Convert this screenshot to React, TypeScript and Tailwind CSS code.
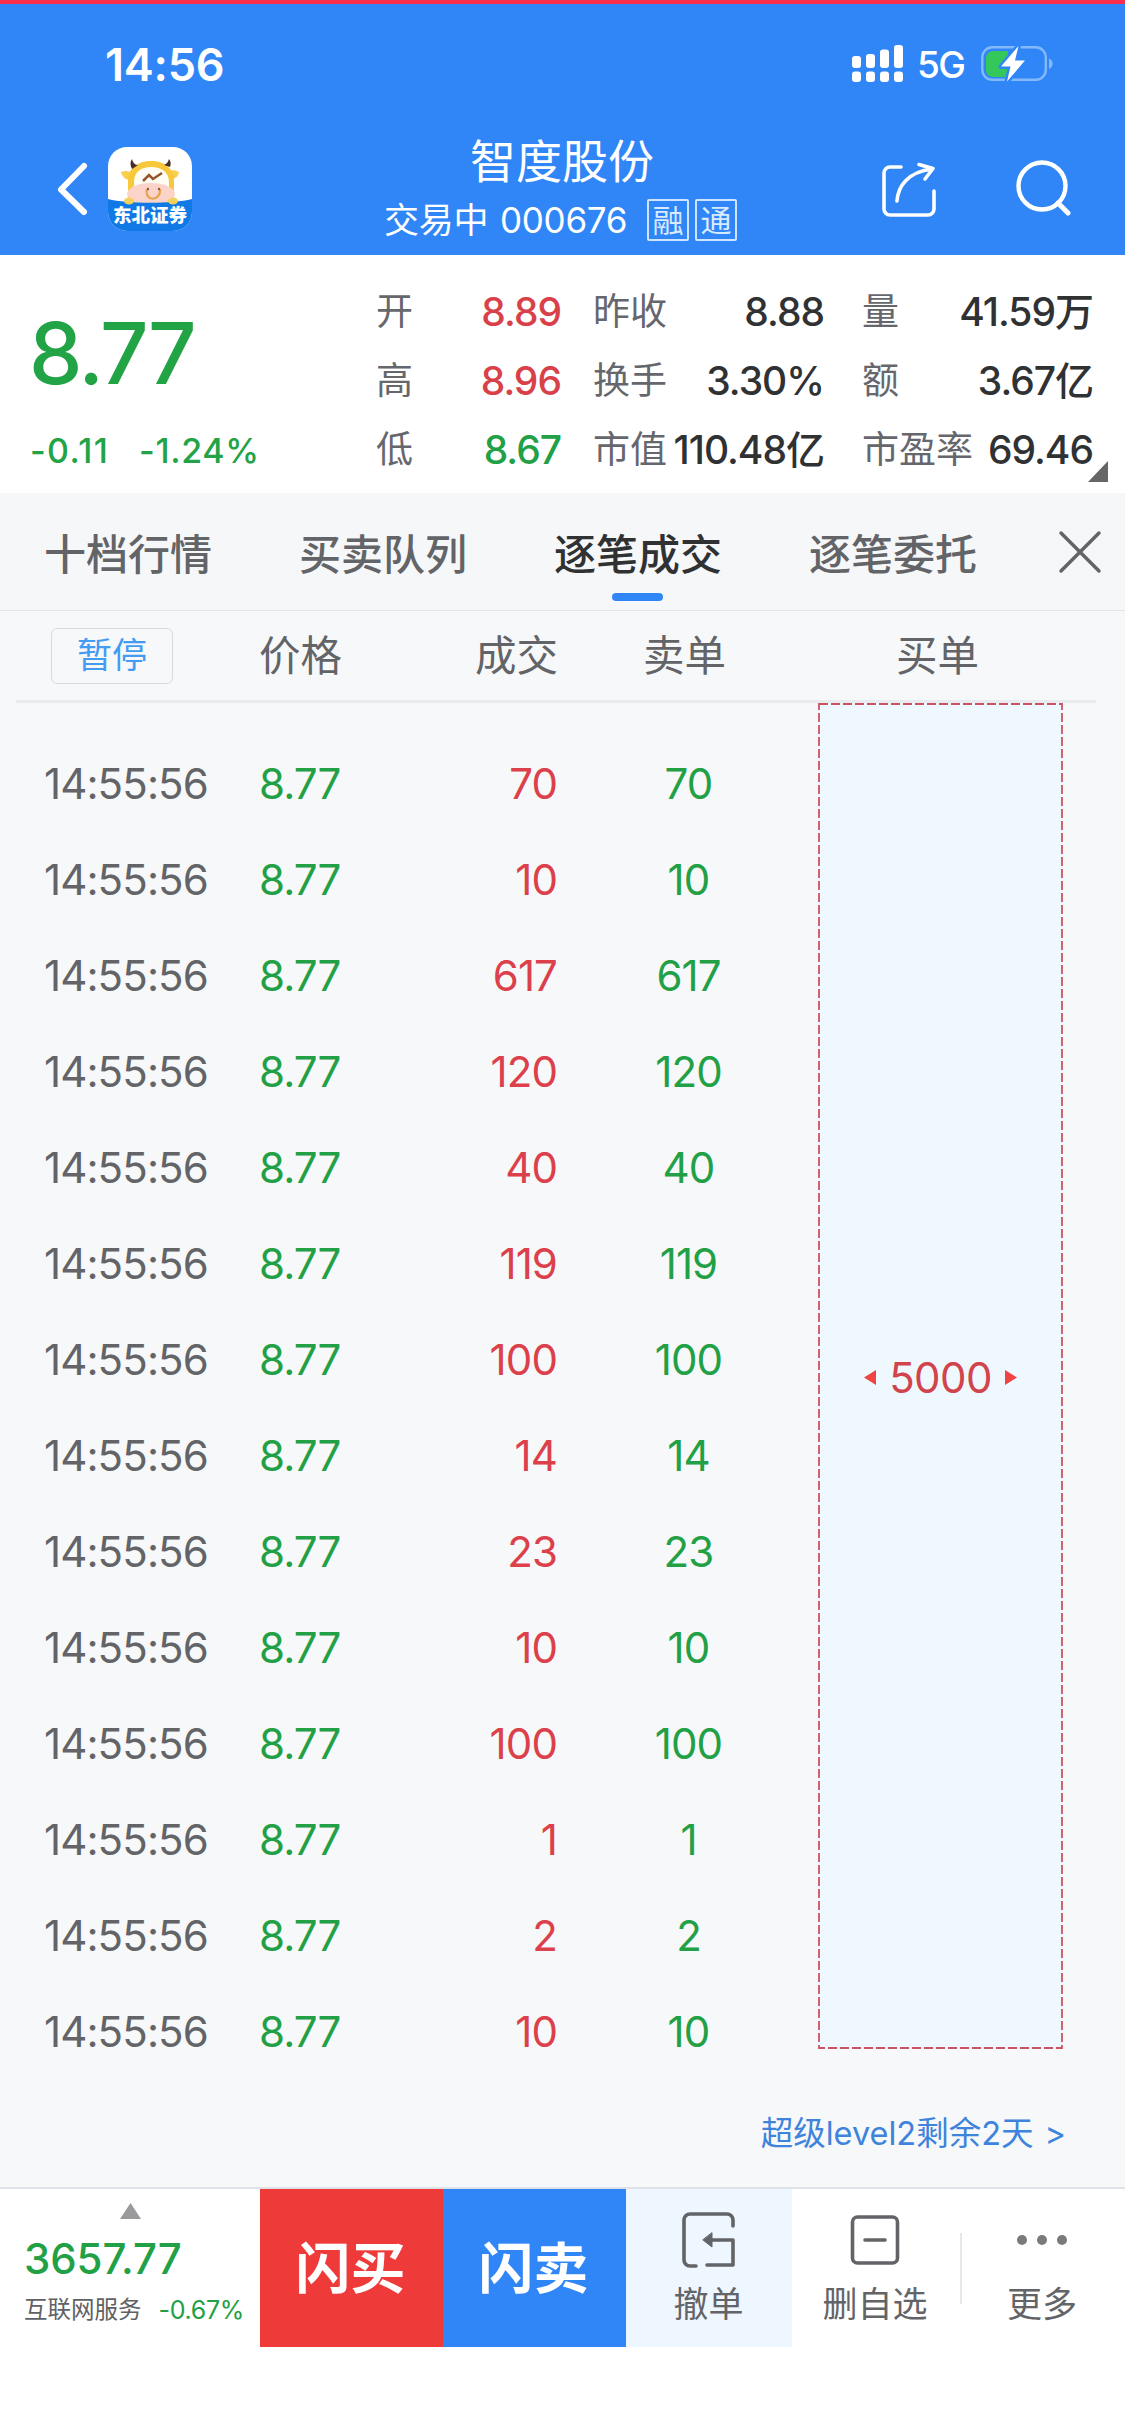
import type { ReactNode } from "react";

const stats = [
  { label: "开", value: "8.89", color: "text-[#d9414a]" },
  { label: "昨收", value: "8.88", color: "text-[#303133]" },
  { label: "量", value: "41.59万", color: "text-[#303133]" },
  { label: "高", value: "8.96", color: "text-[#d9414a]" },
  { label: "换手", value: "3.30%", color: "text-[#303133]" },
  { label: "额", value: "3.67亿", color: "text-[#303133]" },
  { label: "低", value: "8.67", color: "text-[#22a045]" },
  { label: "市值", value: "110.48亿", color: "text-[#303133]" },
  { label: "市盈率", value: "69.46", color: "text-[#303133]" },
];

const tabs = ["十档行情", "买卖队列", "逐笔成交", "逐笔委托"];
const activeTab = "逐笔成交";

const volumes = [70, 10, 617, 120, 40, 119, 100, 14, 23, 10, 100, 1, 2, 10];
const trades = volumes.map((volume) => ({
  time: "14:55:56",
  price: "8.77",
  volume,
}));

export default function App() {
  return (
    <main className="flex h-[2436px] w-[1125px] flex-col overflow-hidden bg-white font-['Inter','Noto_Sans_CJK_SC',sans-serif]">
      <header className="h-[255px] border-t-4 border-[#f92f4d] bg-[#3086f7] text-white">
        <StatusBar />
        <TitleBar />
      </header>
      <Quote />
      <Tabs />
      <TradeTable />
      <BottomBar />
    </main>
  );
}

function StatusBar() {
  return (
    <div className="flex h-[120px] items-center justify-between pl-[105px] pr-[72px]">
      <span className="text-[45px] font-semibold leading-none tracking-[-0.2px]">
        14:56
      </span>
      <div className="flex items-center">
        <svg width="52" height="38" viewBox="0 0 52 38" fill="currentColor">
          <rect x="0" y="11" width="9" height="12" rx="3" />
          <rect x="14" y="9" width="9" height="14" rx="3" />
          <rect x="28" y="4.5" width="9" height="18.5" rx="3" />
          <rect x="42" y="0" width="9" height="23" rx="3" />
          <rect x="0" y="26.5" width="9" height="10.5" rx="3" />
          <rect x="14" y="26.5" width="9" height="10.5" rx="3" />
          <rect x="28" y="26.5" width="9" height="10.5" rx="3" />
          <rect x="42" y="26.5" width="9" height="10.5" rx="3" />
        </svg>
        <span className="ml-[13px] w-[50px] pt-[1px] text-[37px] font-medium leading-none tracking-[-1.6px]">
          5G
        </span>
        <svg
          className="ml-[14px]"
          width="72"
          height="38"
          viewBox="0 0 72 38"
          fill="none"
        >
          <rect
            x="1.3"
            y="2.3"
            width="63.5"
            height="32.5"
            rx="10"
            stroke="#83b9fb"
            strokeWidth="2.4"
          />
          <path d="M68 13.5c2.6 1 3.6 3 3.6 5.2s-1 4.2-3.6 5.2z" fill="#83b9fb" />
          <path d="M12 6h15v26H12a7 7 0 0 1-7-7V13a7 7 0 0 1 7-7z" fill="#34c759" />
          <path
            d="M37.5 1 20 21.5h9.5L26 36.5l18-21h-10z"
            fill="#fff"
            stroke="#3086f7"
            strokeWidth="5"
            strokeLinejoin="round"
            paintOrder="stroke"
          />
        </svg>
      </div>
    </div>
  );
}

function TitleBar() {
  return (
    <div className="flex h-[131px] items-start">
      <div className="flex w-[384px] items-center pl-[55px] pt-[23px]">
        <svg width="34" height="60" viewBox="0 0 34 60" fill="none">
          <path
            d="M29 7 6 30.5 29 53"
            stroke="#fff"
            strokeWidth="6"
            strokeLinecap="round"
            strokeLinejoin="round"
          />
        </svg>
        <BrokerLogo />
      </div>
      <div className="flex w-[353px] flex-col items-center">
        <h1 className="mt-[9px] pl-[3px] text-[46px] leading-[56px]">
          智度股份
        </h1>
        <div className="mt-[9px] flex w-full items-center whitespace-nowrap">
          <span className="w-[263px] shrink-0 text-[35px] leading-[44px] tracking-[-0.2px]">
            交易中 <span className="ml-[2px] tracking-[-0.3px]">000676</span>
          </span>
          <Tag>融</Tag>
          <Tag>通</Tag>
        </div>
      </div>
      <svg
        className="ml-[142px] mt-[36px]"
        width="58"
        height="58"
        viewBox="0 0 58 58"
        fill="none"
        stroke="#fff"
        strokeWidth="3.6"
        strokeLinecap="round"
        strokeLinejoin="round"
      >
        <path d="M22 7H11a6 6 0 0 0-6 6v36a6 6 0 0 0 6 6h38a6 6 0 0 0 6-6V31" />
        <path d="M18 41C19 26 29 12 53 9" />
        <path d="M40 4.5 54 8.5 46 19" />
      </svg>
      <svg
        className="ml-[77px] mt-[34px]"
        width="58"
        height="58"
        viewBox="0 0 58 58"
        fill="none"
        stroke="#fff"
        strokeWidth="4.4"
        strokeLinecap="round"
      >
        <circle cx="28" cy="28" r="23.5" />
        <path d="M44 45 54 55" strokeWidth="5" />
      </svg>
    </div>
  );
}

function Tag({ children }: { children: ReactNode }) {
  return (
    <span className="mr-[6px] flex h-[42px] w-[42px] shrink-0 items-center justify-center rounded-[2px] border-2 border-[#cfe4fe] text-[31px] leading-none text-[#d8eafe]">
      {children}
    </span>
  );
}

function BrokerLogo() {
  return (
    <div className="relative ml-[19px] h-[84px] w-[84px]">
      <svg width="84" height="84" viewBox="0 0 84 84">
        <defs>
          <clipPath id="logo">
            <rect width="84" height="84" rx="19" />
          </clipPath>
        </defs>
        <g clipPath="url(#logo)">
          <rect width="84" height="84" fill="#fff" />
          <path d="M13 25c5-2 9-1 12 2l-3 6c-4 0-8-3-9-8z" fill="#f8cf4f" />
          <path d="M71 25c-5-3-9-2-11 1l3 6c4 0 7-2 8-7z" fill="#f8cf4f" />
          <path d="M20 56V34c0-13 10-20 23-20s23 7 23 20v22z" fill="#f7c83a" />
          <path d="M26 45V35c0-10 7-15 17-15s18 5 18 15v12z" fill="#fffdf3" />
          <ellipse cx="43" cy="47" rx="24" ry="11" fill="#fbd3c8" />
          <path d="M24 22c-2-4-2-7 0-10 1 4 3 6 6 6z" fill="#4a2c26" />
          <path d="M62 20c1-3 1-5-1-8-1 3-2 5-5 6z" fill="#4a2c26" />
          <path
            d="m35 34 6-6 4 4 9-6"
            stroke="#95552f"
            strokeWidth="2.5"
            fill="none"
          />
          <path
            d="M39 42c-3 13 14 13 13 0"
            stroke="#e5a54d"
            strokeWidth="2.2"
            fill="none"
          />
          <circle cx="40" cy="42" r="1.2" fill="#8b5a3c" />
          <circle cx="51" cy="42" r="1.2" fill="#8b5a3c" />
          <path d="M0 52c20 5 64 5 84 0v32H0z" fill="#1179e6" />
          <ellipse cx="21" cy="54" rx="5" ry="3.5" fill="#f3d05c" />
          <ellipse cx="65" cy="54" rx="5" ry="3.5" fill="#f3d05c" />
        </g>
      </svg>
      <span className="absolute left-[5px] top-[59px] whitespace-nowrap text-[18.5px] font-black leading-[18px] text-white">
        东北证券
      </span>
    </div>
  );
}

function Quote() {
  return (
    <section className="relative flex h-[238px] bg-white">
      <div className="w-[376px] pl-[29px] text-[#22a345]">
        <p className="mt-[57px] text-[85px] font-medium leading-[84px] tracking-[-2.4px]">
          8.77
        </p>
        <p className="mt-[35px] flex pl-[1px] text-[34px] font-medium leading-[40px] tracking-[0.7px]">
          <span className="w-[109px] tracking-[1.4px]">-0.11</span>
          <span>-1.24%</span>
        </p>
      </div>
      <dl className="mt-[22px] grid h-[207px] grid-cols-[185px_231px_231px]">
        {stats.map((stat) => (
          <div
            key={stat.label}
            className="flex items-center justify-between whitespace-nowrap leading-[69px] nth-[3n+2]:translate-x-[32px] nth-[3n]:translate-x-[70px]"
          >
            <dt className="text-[37px] text-[#66676d]">{stat.label}</dt>
            <dd
              className={`text-[39px] font-medium tracking-[-1px] ${stat.color}`}
            >
              {stat.value}
            </dd>
          </div>
        ))}
      </dl>
      <svg
        className="absolute bottom-[11px] right-[17px]"
        width="20"
        height="21"
        viewBox="0 0 20 21"
      >
        <path d="M20 0v21H0z" fill="#666" />
      </svg>
    </section>
  );
}

function Tabs() {
  return (
    <nav className="flex h-[118px] border-b border-[#e1e4e8] bg-[#f6f7f9] pl-[44px]">
      {tabs.map((tab) => (
        <div key={tab} className="flex w-[255px] flex-col">
          <span
            className={`mt-[34px] text-[42px] font-medium leading-[56px] ${
              tab === activeTab ? "text-[#303133]" : "text-[#636467]"
            }`}
          >
            {tab}
          </span>
          {tab === activeTab && (
            <span className="ml-[58px] mt-[10px] h-[8px] w-[51px] rounded-full bg-[#3086f7]" />
          )}
        </div>
      ))}
      <svg
        className="-ml-[6px] mt-[37px]"
        width="44"
        height="44"
        viewBox="0 0 44 44"
      >
        <path
          d="M3 3l38 38M41 3 3 41"
          stroke="#636467"
          strokeWidth="3.5"
          strokeLinecap="round"
        />
      </svg>
    </nav>
  );
}

function TradeTable() {
  return (
    <section className="flex h-[1576px] flex-col bg-[#f7f8fa]">
      <div className="ml-[16px] mr-[29px] grid h-[92px] shrink-0 grid-cols-[243px_201px_98px_253px_253px] items-center border-b-[3px] border-[#e9ecef] text-[41.5px] leading-[56px] text-[#636467]">
        <button className="ml-[35px] flex h-[56px] w-[122px] items-center justify-center rounded-[6px] border border-[#d7dbe2] text-[35px] leading-none text-[#439cf2]">
          暂停
        </button>
        <span>价格</span>
        <span className="text-right">成交</span>
        <span className="text-center">卖单</span>
        <span className="text-center">买单</span>
      </div>
      <div className="flex h-[1346px] shrink-0">
        <div className="w-[818px] pl-[44px] pt-[33px]">
          {trades.map((trade, i) => (
            <div
              key={i}
              className="grid h-[96px] grid-cols-[215px_180px_118px_263px] items-center text-[42px] leading-none tracking-[-0.9px]"
            >
              <span className="text-[#636467]">{trade.time}</span>
              <span className="text-[#22a045]">{trade.price}</span>
              <span className="text-right text-[#dc404a]">{trade.volume}</span>
              <span className="text-center text-[#22a045]">
                {trade.volume}
              </span>
            </div>
          ))}
        </div>
        <div className="relative flex w-[245px] items-center justify-center bg-[#eff8fe] pt-[3px] text-[42px] leading-none tracking-[-0.6px] text-[#d2444c]">
          <svg
            className="absolute inset-0"
            width="245"
            height="1346"
            viewBox="0 0 245 1346"
          >
            <rect
              x="1"
              y="1"
              width="243"
              height="1344"
              fill="none"
              stroke="#cc5361"
              strokeWidth="1.8"
              strokeDasharray="9 3"
            />
          </svg>
          <svg width="12" height="15" viewBox="0 0 12 15">
            <path d="M12 0v15L0 7.5z" fill="#ef4444" />
          </svg>
          <span className="w-[129px] text-center">5000</span>
          <svg width="12" height="15" viewBox="0 0 12 15">
            <path d="M0 0v15l12-7.5z" fill="#ef4444" />
          </svg>
        </div>
      </div>
      <a className="mr-[59px] mt-[63px] flex justify-end text-[32.5px] leading-[44px] text-[#3f84dc]">
        <span>超级level2剩余2天</span>
        <span className="ml-[11px]">&gt;</span>
      </a>
    </section>
  );
}

function BottomBar() {
  return (
    <footer className="flex h-[160px] border-t-2 border-[#dfe2e6]">
      <div className="w-[260px] pl-[24px]">
        <svg
          className="ml-[96px] mt-[14px]"
          width="21"
          height="16"
          viewBox="0 0 21 16"
        >
          <path d="M10.5 0 21 16H0z" fill="#9a9a9c" />
        </svg>
        <p className="mt-[18px] text-[42px] font-medium leading-[44px] tracking-[-0.1px] text-[#22a045]">
          3657.77
        </p>
        <p className="mt-[13px] flex whitespace-nowrap text-[23.5px] leading-[32px] text-[#606164]">
          互联网服务
          <span className="ml-[17px] text-[25px] tracking-[-0.3px] text-[#22a045]">
            -0.67%
          </span>
        </p>
      </div>
      <button className="w-[183px] bg-[#ef3a3a] pr-[2px] text-[55px] font-bold text-white">
        闪买
      </button>
      <button className="w-[183px] bg-[#3086f7] pr-[2px] text-[55px] font-bold text-white">
        闪卖
      </button>
      <Action label="撤单" className="w-[166px] bg-[#eef6ff] pr-[1px]">
        <path d="M52 15V9a6 6 0 0 0-6-6H9a6 6 0 0 0-6 6v40a6 6 0 0 0 6 6h6M26 54h26V29H30" />
        <path d="M31 22v14l-9-7z" fill="currentColor" strokeWidth="1" />
      </Action>
      <Action label="删自选" className="w-[168px] pr-[2px]">
        <rect x="5.5" y="6" width="45" height="46" rx="5" />
        <path d="M18 29h20" />
      </Action>
      <div className="mt-[44px] h-[71px] w-[2px] bg-[#e6e7e9]" />
      <Action label="更多" className="w-[160px]">
        <g fill="currentColor" stroke="none" opacity="0.85">
          <circle cx="8" cy="29" r="5" />
          <circle cx="28" cy="29" r="5" />
          <circle cx="48" cy="29" r="5" />
        </g>
      </Action>
    </footer>
  );
}

type ActionProps = {
  label: string;
  className: string;
  children: ReactNode;
};

function Action({ label, className, children }: ActionProps) {
  return (
    <button
      className={`flex flex-col items-center text-[#636467] ${className}`}
    >
      <svg
        className="mt-[22px]"
        width="56"
        height="58"
        viewBox="0 0 56 58"
        fill="none"
        stroke="currentColor"
        strokeWidth="3.6"
        strokeLinecap="round"
        strokeLinejoin="round"
      >
        {children}
      </svg>
      <span className="mt-[13px] text-[35px] leading-[44px]">{label}</span>
    </button>
  );
}
